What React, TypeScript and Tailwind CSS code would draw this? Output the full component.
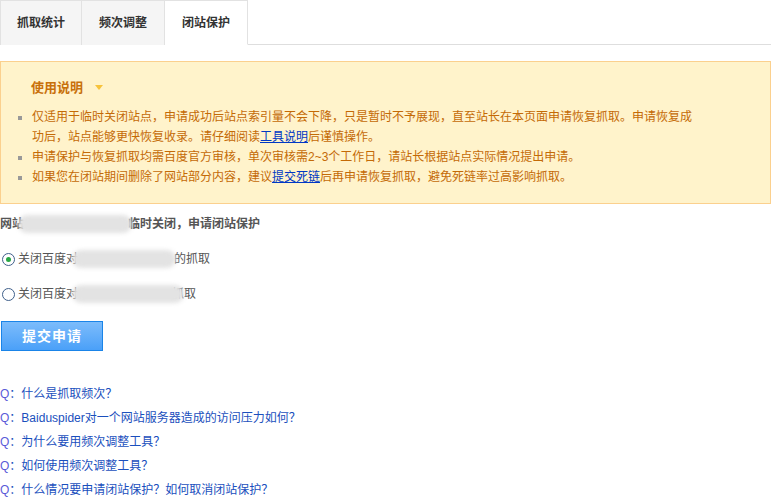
import React from "react";

const font = { fontFamily: '"Liberation Sans", "Noto Sans CJK SC", sans-serif' };

function Blur({ w }: { w: number }) {
  return (
    <span
      className="inline-block h-[18px] align-middle rounded-full bg-[#e3e3e3] blur-[2px]"
      style={{ width: w }}
    />
  );
}

const faqs = [
  "什么是抓取频次？",
  "Baiduspider对一个网站服务器造成的访问压力如何？",
  "为什么要用频次调整工具？",
  "如何使用频次调整工具？",
  "什么情况要申请闭站保护？如何取消闭站保护？",
];

export default function App() {
  return (
    <div className="w-[776px] h-[504px] bg-white overflow-hidden text-[12px]" style={font}>
      {/* 标签栏 */}
      <div className="flex w-[771px] h-[45px] border-b border-[#dedede]">
        <div className="w-[82px] flex items-center justify-center bg-[#f5f5f5] border-l border-t border-r border-[#e2e2e2] font-bold text-[#333] -mb-px">抓取统计</div>
        <div className="w-[83px] flex items-center justify-center bg-[#f5f5f5] border-t border-r border-[#e2e2e2] font-bold text-[#333] -mb-px">频次调整</div>
        <div className="w-[83px] flex items-center justify-center bg-white border-t border-r border-[#e2e2e2] font-bold text-[#333] -mb-px border-b border-b-white">闭站保护</div>
      </div>

      {/* 使用说明 */}
      <div className="mt-4 w-[771px] h-[143px] border border-[#fbd08e] bg-[#fff3cb] pl-[17px] pt-[16px]">
        <div className="flex items-center gap-[12px] pl-[13px] text-[13px] font-bold text-[#c8700a]">
          使用说明
          <span className="w-0 h-0 border-l-[4px] border-r-[4px] border-t-[5px] border-l-transparent border-r-transparent border-t-[#f7c33c]" />
        </div>
        <ul className="mt-[9px] w-[680px] text-[#c46a06] leading-[20px]">
          <li className="flex">
            <span className="w-[4px] h-[4px] bg-[#999] mt-[9px] mr-[10px] shrink-0" />
            <p className="w-[664px]">
              仅适用于临时关闭站点，申请成功后站点索引量不会下降，只是暂时不予展现，直至站长在本页面申请恢复抓取。申请恢复成功后，站点能够更快恢复收录。请仔细阅读<a className="text-[#0037c4] underline">工具说明</a>后谨慎操作。
            </p>
          </li>
          <li className="flex">
            <span className="w-[4px] h-[4px] bg-[#999] mt-[9px] mr-[10px] shrink-0" />
            <p>申请保护与恢复抓取均需百度官方审核，单次审核需2~3个工作日，请站长根据站点实际情况提出申请。</p>
          </li>
          <li className="flex">
            <span className="w-[4px] h-[4px] bg-[#999] mt-[9px] mr-[10px] shrink-0" />
            <p>如果您在闭站期间删除了网站部分内容，建议<a className="text-[#0037c4] underline">提交死链</a>后再申请恢复抓取，避免死链率过高影响抓取。</p>
          </li>
        </ul>
      </div>

      {/* 表单 */}
      <div className="mt-[10px] flex items-center font-bold text-[#555] h-[20px]">
        网站<span className="-ml-[6px] -mr-[4px]"><Blur w={114} /></span>临时关闭，申请闭站保护
      </div>

      <label className="mt-[15px] flex items-center h-[20px] text-[#555]">
        <span className="w-[13px] h-[13px] rounded-full border border-[#3f5f8a] bg-white flex items-center justify-center mr-[3px] ml-[2px]">
          <span className="w-[5px] h-[5px] rounded-full bg-[#28a745]" />
        </span>
        关闭百度对<span className="-ml-[6px] -mr-[2px]"><Blur w={104} /></span>的抓取
      </label>

      <label className="mt-[15px] flex items-center h-[20px] text-[#555]">
        <span className="w-[13px] h-[13px] rounded-full border border-[#3f5f8a] bg-white mr-[3px] ml-[2px]" />
        关闭百度对<span className="-ml-[6px] -mr-[12px]"><Blur w={112} /></span>抓取
      </label>

      <button className="mt-[17px] ml-[1px] w-[102px] h-[30px] border border-[#1a84e8] bg-gradient-to-b from-[#7cbcfb] to-[#4aa0f8] text-white font-bold text-[14px] tracking-[1px]">
        提交申请
      </button>

      {/* 常见问题 */}
      <div className="mt-[31px] flex flex-col">
        {faqs.map((q) => (
          <div key={q} className="h-[24px] leading-[24px] text-[#1a4fbd]">
            <span className="text-[#5a5ad8]">Q</span>：{q}
          </div>
        ))}
      </div>
    </div>
  );
}
